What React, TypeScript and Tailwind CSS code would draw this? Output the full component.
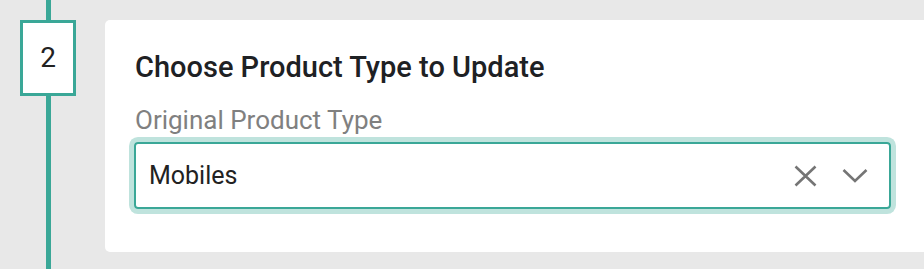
export default function App() {
  return (
    <div
      className="flex h-[269px] w-[924px] overflow-hidden bg-[#e8e8e8]"
      style={{ fontFamily: "Roboto, 'Liberation Sans', sans-serif" }}
    >
      {/* Step rail */}
      <div className="flex w-[105px] shrink-0 flex-col items-center pr-[29px] pl-[20px]">
        <div className="h-[20px] w-[5px] bg-[#3aa797]" />
        <div className="flex h-[76px] w-[56px] items-center justify-center border-[3px] border-[#3aa797] bg-white text-[28px] text-[#222]">
          2
        </div>
        <div className="w-[5px] flex-1 bg-[#3aa797]" />
      </div>

      {/* Card */}
      <div className="mt-[20px] h-[232px] w-[840px] shrink-0 rounded-[5px] bg-white pt-[29px] pl-[29px]">
        <h2 className="pl-[1px] text-[29px] leading-[36px] font-medium text-[#1e2124]">
          Choose Product Type to Update
        </h2>
        <p className="mt-[20px] pl-[1px] text-[26px] leading-[30px] text-[#808080]">
          Original Product Type
        </p>
        <div className="mt-[7px] flex h-[67px] w-[757px] items-center rounded-[4px] border-2 border-[#3aa797] pr-[21px] pl-[13px] ring-[5px] ring-[#bfe3dd]">
          <span className="flex-1 text-[25px] text-[#222]">Mobiles</span>
          <svg width="23" height="22" viewBox="0 0 23 22" className="text-[#757575]">
            <path d="M1.5 1.5 21.5 20.5M21.5 1.5 1.5 20.5" stroke="currentColor" strokeWidth="2.6" fill="none" />
          </svg>
          <svg width="26" height="15" viewBox="0 0 26 15" className="ml-[25px] text-[#757575]">
            <path d="M1.5 2 13 13 24.5 2" stroke="currentColor" strokeWidth="2.6" fill="none" />
          </svg>
        </div>
      </div>
    </div>
  );
}
